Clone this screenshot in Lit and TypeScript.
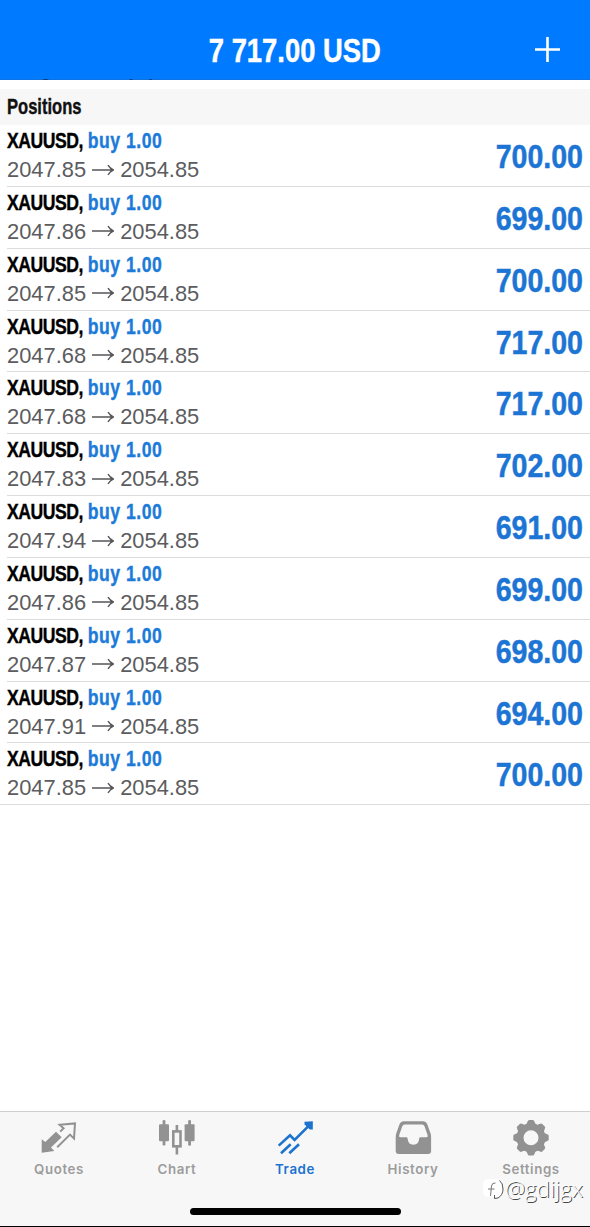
import { LitElement, html, css, svg } from 'lit';
import { customElement, property } from 'lit/decorators.js';

interface Position {
  open: string;
  current: string;
  profit: string;
}

const POSITIONS: Position[] = [
  { open: '2047.85', current: '2054.85', profit: '700.00' },
  { open: '2047.86', current: '2054.85', profit: '699.00' },
  { open: '2047.85', current: '2054.85', profit: '700.00' },
  { open: '2047.68', current: '2054.85', profit: '717.00' },
  { open: '2047.68', current: '2054.85', profit: '717.00' },
  { open: '2047.83', current: '2054.85', profit: '702.00' },
  { open: '2047.94', current: '2054.85', profit: '691.00' },
  { open: '2047.86', current: '2054.85', profit: '699.00' },
  { open: '2047.87', current: '2054.85', profit: '698.00' },
  { open: '2047.91', current: '2054.85', profit: '694.00' },
  { open: '2047.85', current: '2054.85', profit: '700.00' },
];

const ICONS = {
  quotes: svg`
    <path class="fill" d="M2.7 21.3 6.3 24 17 13.7 22.7 19.3 12 29.6 15.3 32.9 2.7 34.7Z" />
    <path class="line" d="M21.2 13.6 24.6 10.3 20.6 6.7 36 5.4 35 20.6 31 16.6 18.2 29.3" />`,
  chart: svg`
    <rect class="fill" x="2" y="6.3" width="10" height="17" rx="1" />
    <rect class="fill" x="5.6" y="2" width="2.8" height="25.4" rx="1.2" />
    <rect class="line thick" x="16.3" y="13.4" width="7.2" height="14.9" />
    <path class="line thick" d="M19.9 7V13M19.9 29V36.6" />
    <rect class="fill" x="27.6" y="6.3" width="10" height="17" rx="1" />
    <rect class="fill" x="31.2" y="2" width="2.8" height="25.8" rx="1.2" />`,
  trade: svg`
    <path class="line thick" d="M3.7 27.6 15 17.4 19.6 22 36 5.6" />
    <path class="line thick" d="M6 35.3 15.7 26.2M14.3 35.3 24 26.2" />
    <path class="fill" d="M29.4 3.8 37.8 3.3V11.6L34.8 11.4 29.6 6.6Z" />`,
  history: svg`
    <path class="fill" fill-rule="evenodd" d="M10.3 3.3H30.4Q33 3.3 34.1 5.8L37.6 15.4Q38.1 17 38.1 19V33Q38.1 36 35 36H5.8Q2.7 36 2.7 33V19Q2.7 17 3.2 15.4L6.7 5.8Q7.7 3.3 10.3 3.3ZM11.7 6.5Q10 6.5 9.3 8.2L6.3 16.8Q5.6 19.3 7.2 19.3H13.4Q14.5 19.3 14.6 20.6Q15 26.8 20.4 26.8T26.2 20.6Q26.3 19.3 27.4 19.3H33.6Q35.2 19.3 34.5 16.8L31.5 8.2Q30.8 6.5 29.1 6.5Z" />`,
  settings: svg`
    <circle class="ring" cx="20" cy="19.7" r="11" />
    ${[0, 45, 90, 135, 180, 225, 270, 315].map(
      (angle) => svg`<path class="fill" transform="rotate(${angle} 20 19.7)" d="M15 7 16.6 3.5Q17 2 18.2 2H21.8Q23 2 23.4 3.5L25 7Z" />`,
    )}`,
};

type IconName = keyof typeof ICONS;

const TABS: { icon: IconName; label: string }[] = [
  { icon: 'quotes', label: 'Quotes' },
  { icon: 'chart', label: 'Chart' },
  { icon: 'trade', label: 'Trade' },
  { icon: 'history', label: 'History' },
  { icon: 'settings', label: 'Settings' },
];

@customElement('position-row')
export class PositionRow extends LitElement {
  @property({ attribute: false }) position!: Position;

  static styles = css`
    :host {
      display: flex;
      justify-content: space-between;
      box-sizing: border-box;
      height: 61.85px;
      padding-right: 7px;
      margin-left: 7px;
      border-bottom: 1px solid #dcdcde;
      white-space: nowrap;
    }
    :host(:last-child) {
      margin-left: 0;
      padding-left: 7px;
    }
    .info {
      display: flex;
      flex-direction: column;
    }
    /* condensed look: regular bold squeezed horizontally */
    .symbol {
      height: 31px;
      font: bold 22px/32px 'Liberation Sans', Arial, sans-serif;
      letter-spacing: -0.6px;
      color: #000;
      transform: scaleX(0.8);
      transform-origin: left;
      -webkit-text-stroke: 0.4px currentColor;
    }
    .side {
      color: #1c7ad9;
      margin-left: 0.5px;
      letter-spacing: 0.65px;
    }
    .prices {
      display: flex;
      align-items: center;
      gap: 6px;
      height: 28px;
      font: 21.9px/28px 'Liberation Sans', Arial, sans-serif;
      color: #5c5c60;
    }
    svg {
      width: 22px;
      height: 12px;
      margin-top: -1px;
      fill: none;
      stroke: #555558;
      stroke-width: 1.4;
    }
    .profit {
      font: bold 34px/63px 'Liberation Sans', Arial, sans-serif;
      color: #1c75d4;
      transform: scaleX(0.84);
      transform-origin: right;
      -webkit-text-stroke: 0.5px currentColor;
    }
  `;

  render() {
    const { open, current, profit } = this.position;
    return html`
      <div class="info">
        <div class="symbol">XAUUSD, <span class="side">buy 1.00</span></div>
        <div class="prices">
          <span>${open}</span>
          <svg viewBox="0 0 22 12"><path d="M0 6H21M16 1.2Q18 4.5 21.3 6Q18 7.5 16 10.8" /></svg>
          <span>${current}</span>
        </div>
      </div>
      <div class="profit">${profit}</div>
    `;
  }
}

@customElement('tab-item')
export class TabItem extends LitElement {
  @property() icon: IconName = 'quotes';
  @property() label = '';
  @property({ type: Boolean, reflect: true }) active = false;

  static styles = css`
    :host {
      display: flex;
      flex: 1;
      flex-direction: column;
      align-items: center;
      padding-top: 6px;
      color: #929292;
    }
    :host([active]) {
      color: #1c73cf;
    }
    svg {
      width: 40px;
      height: 40px;
    }
    .fill {
      fill: currentColor;
    }
    .line {
      fill: none;
      stroke: currentColor;
      stroke-width: 2;
    }
    .thick {
      stroke-width: 2.6;
    }
    .ring {
      fill: none;
      stroke: currentColor;
      stroke-width: 7;
    }
    .label {
      font: 600 13.3px/22px Inter, 'Liberation Sans', sans-serif;
      letter-spacing: 0.6px;
      color: #9c9c9c;
    }
    :host([active]) .label {
      color: #1c73cf;
    }
  `;

  render() {
    return html`
      <svg viewBox="0 0 40 40" aria-hidden="true">${ICONS[this.icon]}</svg>
      <span class="label">${this.label}</span>
    `;
  }
}

@customElement('app-root')
export class AppRoot extends LitElement {
  static styles = css`
    :host {
      display: flex;
      flex-direction: column;
      position: relative;
      box-sizing: border-box;
      width: 590px;
      height: 1227px;
      overflow: hidden;
      background: #fff;
      border-bottom: 1px solid #000;
    }
    header {
      display: grid;
      grid-template-columns: 1fr auto 1fr;
      align-items: center;
      flex: none;
      box-sizing: border-box;
      height: 80px;
      padding: 20px 30px 0 29px;
      background: #007aff;
      border-bottom: 1px solid #0f72e0;
      color: #fff;
    }
    h1 {
      grid-column: 2;
      margin: 0;
      font: bold 34px/58px 'Liberation Sans', Arial, sans-serif;
      white-space: nowrap;
      transform: scaleX(0.805);
      -webkit-text-stroke: 0.5px currentColor;
    }
    .add {
      justify-self: end;
      width: 25px;
      height: 25px;
      margin-top: -1px;
      stroke: #fff;
      stroke-width: 2.6;
    }
    /* last summary line, almost fully scrolled under the header */
    .scrolled {
      display: flex;
      align-items: flex-end;
      flex: none;
      height: 2px;
      margin-top: -1px;
      margin-bottom: 8px;
      padding-left: 7px;
      overflow: hidden;
      font: bold 22px/26px 'Liberation Sans', Arial, sans-serif;
      color: #123f7c;
    }
    .scrolled span {
      transform: scaleX(0.85);
      transform-origin: left;
    }
    h2 {
      flex: none;
      height: 36px;
      margin: 0;
      background: #f7f7f7;
      font: bold 21.5px/37px 'Liberation Sans', Arial, sans-serif;
      color: #111;
    }
    h2 span {
      display: inline-block;
      margin-left: 7px;
      transform: scaleX(0.77);
      transform-origin: left;
      -webkit-text-stroke: 0.4px currentColor;
    }
    main {
      flex: 1;
    }
    nav {
      display: flex;
      flex: none;
      height: 96px;
      background: #f7f7f7;
      border-top: 1px solid #cfcfcf;
    }
    .home {
      display: flex;
      justify-content: center;
      flex: none;
      height: 18px;
      background: #f7f7f7;
    }
    .home::before {
      content: '';
      width: 211px;
      height: 7px;
      border-radius: 4px;
      background: #000;
    }
    .watermark {
      position: absolute;
      right: 7px;
      bottom: 25px;
      display: flex;
      align-items: center;
      gap: 1px;
      font: 300 22.5px/24px 'Open Sans', 'Noto Sans', sans-serif;
      letter-spacing: 0;
      color: #fff;
      text-shadow: 1px 1px 0.5px #444;
    }
    .watermark svg {
      width: 21px;
      height: 22px;
    }
  `;

  render() {
    return html`
      <header>
        <h1>7 717.00 USD</h1>
        <svg class="add" viewBox="0 0 25 25"><path d="M12.5 0V25M0 12.5H25" /></svg>
      </header>
      <div class="scrolled"><span>Margin Level (%):</span></div>
      <h2><span>Positions</span></h2>
      <main>
        ${POSITIONS.map((position) => html`<position-row .position=${position}></position-row>`)}
      </main>
      <nav>
        ${TABS.map(
          (tab) => html`<tab-item .icon=${tab.icon} .label=${tab.label} ?active=${tab.icon === 'trade'}></tab-item>`,
        )}
      </nav>
      <div class="home"></div>
      <div class="watermark">
        <svg viewBox="0 0 21 22">
          <rect x="0" y="1" width="19" height="18" rx="5" fill="#fff" />
          <path d="M16.5 2.5Q20 5 20 11T15 20L11.5 20.5V17" fill="none" stroke="#555" stroke-width="1" />
          <path d="M12.5 5Q9 4.5 8.5 8L7.5 18M5 11H11.5" fill="none" stroke="#777" stroke-width="1" />
        </svg>
        <span>@gdijgx</span>
      </div>
    `;
  }
}

declare global {
  interface HTMLElementTagNameMap {
    'app-root': AppRoot;
    'position-row': PositionRow;
    'tab-item': TabItem;
  }
}
